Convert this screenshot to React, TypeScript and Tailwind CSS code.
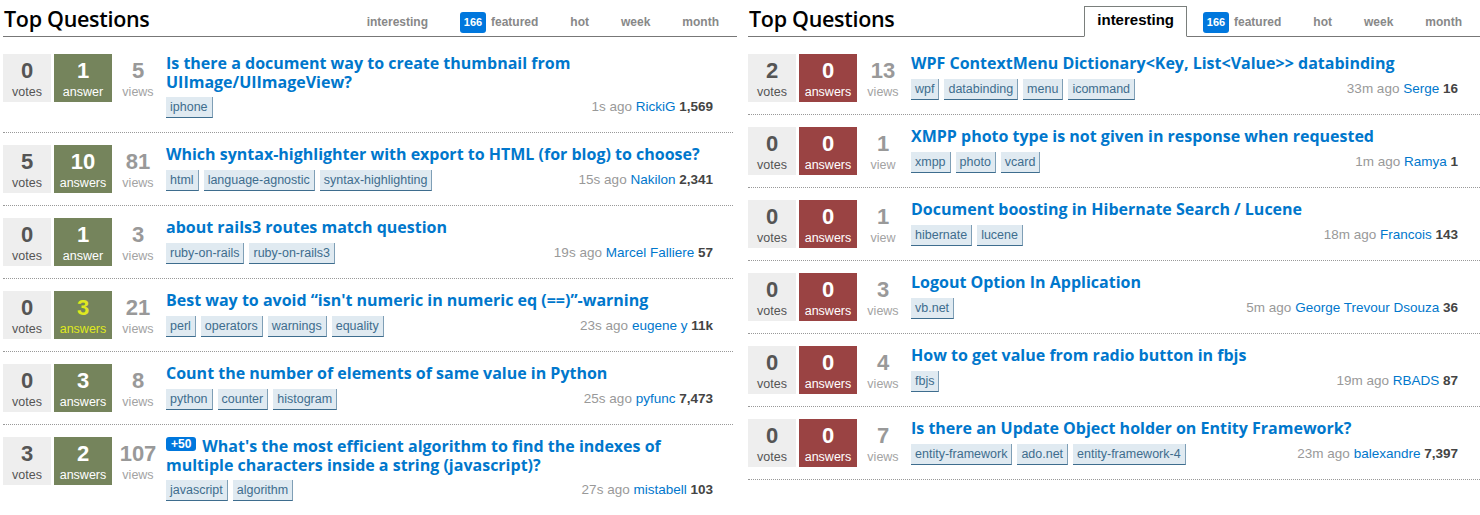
import React from "react";

type Q = {
  votes: number;
  answers: number;
  views: number;
  title: React.ReactNode;
  tags: string[];
  time: string;
  user: string;
  rep: string;
  bounty?: string;
  accepted?: boolean;
};

const left: Q[] = [
  {
    votes: 0,
    answers: 1,
    views: 5,
    title: (
      <>
        Is there a document way to create thumbnail from
        <br />
        UIImage/UIImageView?
      </>
    ),
    tags: ["iphone"],
    time: "1s ago",
    user: "RickiG",
    rep: "1,569",
  },
  {
    votes: 5,
    answers: 10,
    views: 81,
    title: "Which syntax-highlighter with export to HTML (for blog) to choose?",
    tags: ["html", "language-agnostic", "syntax-highlighting"],
    time: "15s ago",
    user: "Nakilon",
    rep: "2,341",
  },
  {
    votes: 0,
    answers: 1,
    views: 3,
    title: "about rails3 routes match question",
    tags: ["ruby-on-rails", "ruby-on-rails3"],
    time: "19s ago",
    user: "Marcel Falliere",
    rep: "57",
  },
  {
    votes: 0,
    answers: 3,
    views: 21,
    title: "Best way to avoid \u201cisn't numeric in numeric eq (==)\u201d-warning",
    tags: ["perl", "operators", "warnings", "equality"],
    time: "23s ago",
    user: "eugene y",
    rep: "11k",
    accepted: true,
  },
  {
    votes: 0,
    answers: 3,
    views: 8,
    title: "Count the number of elements of same value in Python",
    tags: ["python", "counter", "histogram"],
    time: "25s ago",
    user: "pyfunc",
    rep: "7,473",
  },
  {
    votes: 3,
    answers: 2,
    views: 107,
    bounty: "+50",
    title: (
      <>
        What's the most efficient algorithm to find the indexes of
        <br />
        multiple characters inside a string (javascript)?
      </>
    ),
    tags: ["javascript", "algorithm"],
    time: "27s ago",
    user: "mistabell",
    rep: "103",
  },
];

const right: Q[] = [
  {
    votes: 2,
    answers: 0,
    views: 13,
    title: "WPF ContextMenu Dictionary<Key, List<Value>> databinding",
    tags: ["wpf", "databinding", "menu", "icommand"],
    time: "33m ago",
    user: "Serge",
    rep: "16",
  },
  {
    votes: 0,
    answers: 0,
    views: 1,
    title: "XMPP photo type is not given in response when requested",
    tags: ["xmpp", "photo", "vcard"],
    time: "1m ago",
    user: "Ramya",
    rep: "1",
  },
  {
    votes: 0,
    answers: 0,
    views: 1,
    title: "Document boosting in Hibernate Search / Lucene",
    tags: ["hibernate", "lucene"],
    time: "18m ago",
    user: "Francois",
    rep: "143",
  },
  {
    votes: 0,
    answers: 0,
    views: 3,
    title: "Logout Option In Application",
    tags: ["vb.net"],
    time: "5m ago",
    user: "George Trevour Dsouza",
    rep: "36",
  },
  {
    votes: 0,
    answers: 0,
    views: 4,
    title: "How to get value from radio button in fbjs",
    tags: ["fbjs"],
    time: "19m ago",
    user: "RBADS",
    rep: "87",
  },
  {
    votes: 0,
    answers: 0,
    views: 7,
    title: "Is there an Update Object holder on Entity Framework?",
    tags: ["entity-framework", "ado.net", "entity-framework-4"],
    time: "23m ago",
    user: "balexandre",
    rep: "7,397",
  },
];

function Tab({ label, badge }: { label: string; badge?: string }) {
  return (
    <div className="flex items-center h-[26px] pb-[2px] px-4 text-[12px] leading-[14px] font-bold text-[#888]">
      {badge && (
        <span className="mr-[5px] flex items-center justify-center w-[26px] h-[21px] rounded-[3px] bg-[#0077dd] text-white text-[11px] font-bold">
          {badge}
        </span>
      )}
      <span>{label}</span>
    </div>
  );
}

function Header({ selected }: { selected: boolean }) {
  return (
    <div className="flex justify-between items-end h-[37px] border-b border-[#777]">
      <div className="pl-[1px] self-start pt-[6px] font-['Open_Sans',sans-serif] font-semibold text-[21.5px] leading-[26px] text-black tracking-[-0.3px]">
        Top Questions
      </div>
      <div className="flex items-end pr-[2px]">
        {selected ? (
          <div className="mb-[-1px] h-[31px] px-[12px] pt-[4px] border border-[#7a7f7c] border-b-white bg-white text-[15px] leading-[18px] font-bold text-black">
            interesting
          </div>
        ) : (
          <Tab label="interesting" />
        )}
        <Tab label="featured" badge="166" />
        <Tab label="hot" />
        <Tab label="week" />
        <Tab label="month" />
      </div>
    </div>
  );
}

function Row({ q, pr }: { q: Q; pr: string }) {
  const ansBg = q.answers === 0 ? "bg-[#9a4343]" : "bg-[#75845c]";
  const ansText = q.accepted ? "text-[#dfe820]" : "text-white";
  return (
    <div className="flex py-3 border-b border-dotted border-[#999]">
      <div className="shrink-0 w-[48px] h-[48px] bg-[#eeeeee] flex flex-col items-center pt-[6px] text-[#555]">
        <span className="text-[22px] leading-[22px] font-bold">{q.votes}</span>
        <span className="text-[12.5px] leading-[14px] mt-[3px]">votes</span>
      </div>
      <div
        className={`shrink-0 ml-[3px] w-[58px] h-[48px] flex flex-col items-center pt-[6px] ${ansBg} ${ansText}`}
      >
        <span className="text-[22px] leading-[22px] font-bold">{q.answers}</span>
        <span className="text-[12.5px] leading-[14px] mt-[3px]">
          {q.answers === 1 ? "answer" : "answers"}
        </span>
      </div>
      <div className="shrink-0 ml-px w-[50px] h-[48px] flex flex-col items-center pt-[6px] text-[#999]">
        <span className="text-[22px] leading-[22px] font-bold">{q.views}</span>
        <span className="text-[12.5px] leading-[14px] mt-[3px] text-[#a3a3a3]">
          {q.views === 1 ? "view" : "views"}
        </span>
      </div>
      <div className="ml-[3px] flex-1 min-w-0">
        <h3 className="font-['Open_Sans',sans-serif] font-bold text-[16px] leading-[18.5px] text-[#0077cc]">
          {q.bounty && (
            <span className="inline-block align-top mr-[6px] h-[14px] px-[5px] rounded-[3px] bg-[#0077dd] text-white font-['Liberation_Sans',Arial,sans-serif] text-[12px] leading-[14px] font-bold">
              {q.bounty}
            </span>
          )}
          {q.title}
        </h3>
        <div className={`mt-[6px] mb-[2px] flex items-baseline justify-between ${pr}`}>
          <div className="flex gap-[5px]">
            {q.tags.map((t) => (
              <span
                key={t}
                className="inline-block px-[4px] pt-[3px] pb-[3px] text-[12.5px] leading-[14px] bg-[#e0eaf1] text-[#3e6d8e] border-b border-r border-b-[#3e6d8e] border-r-[#7f9fb6]"
              >
                {t}
              </span>
            ))}
          </div>
          <div className="text-[13.5px] leading-[16px] whitespace-nowrap">
            <span className="text-[#999]">{q.time}</span>{" "}
            <span className="text-[#0077cc]">{q.user}</span>{" "}
            <span className="font-bold text-[#444]">{q.rep}</span>
          </div>
        </div>
      </div>
    </div>
  );
}

export default function App() {
  return (
    <div className="w-[1480px] h-[515px] overflow-hidden bg-white font-['Liberation_Sans',Arial,sans-serif] flex">
      <div className="ml-[3px] w-[734px] shrink-0">
        <Header selected={false} />
        <div className="mt-[5px] mr-[4px]">
          {left.map((q, i) => (
            <Row key={i} q={q} pr="pr-[20px]" />
          ))}
        </div>
      </div>
      <div className="ml-[11px] w-[732px] shrink-0">
        <Header selected={true} />
        <div className="mt-[5px]">
          {right.map((q, i) => (
            <Row key={i} q={q} pr="pr-[22px]" />
          ))}
        </div>
      </div>
    </div>
  );
}
